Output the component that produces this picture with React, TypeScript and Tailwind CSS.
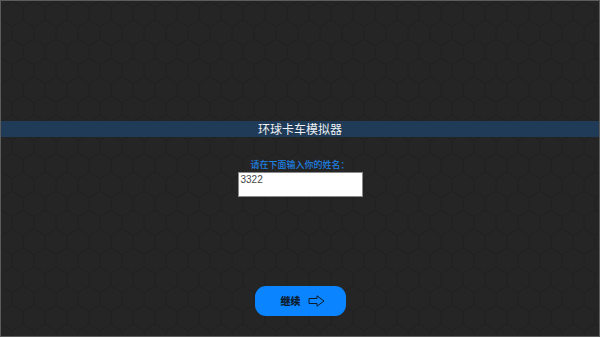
import React from "react";

function HexBg() {
  return (
    <svg className="absolute inset-0 h-full w-full" aria-hidden="true">
      <defs>
        <pattern id="hex" width="22" height="38" patternUnits="userSpaceOnUse">
          <path
            d="M0 6.5 L11 0 L22 6.5 M0 6.5 L0 19 L11 25.5 L22 19 L22 6.5 M11 25.5 L11 38"
            fill="none"
            stroke="#1f1f1f"
            strokeWidth="1"
          />
        </pattern>
      </defs>
      <rect width="100%" height="100%" fill="url(#hex)" />
    </svg>
  );
}

export default function App() {
  return (
    <div
      className="relative w-[600px] h-[337px] overflow-hidden bg-[#252525] border border-[#5c5c5c]"
      style={{ fontFamily: '"Noto Sans CJK SC", "Noto Sans", sans-serif' }}
    >
      <HexBg />
      <div className="relative flex flex-col items-center pt-[120px]">
        <div className="w-full h-[16px] bg-[#1f3b57] flex items-center justify-center">
          <span className="text-[12px] leading-none text-[#eef2f6]">环球卡车模拟器</span>
        </div>
        <div className="mt-[23px] text-[9px] font-medium leading-none text-[#1d80e2]">请在下面输入你的姓名：</div>
        <div
          className="mt-[3px] w-[125px] h-[25px] bg-white border border-[#8a8a8a] px-[2px] pt-[1px] text-[10px] leading-[12px] text-[#474747]"
          style={{ fontFamily: '"Liberation Sans", Arial, sans-serif' }}
        >
          3322
        </div>
        <button className="mt-[89px] ml-[1px] w-[91px] h-[30px] rounded-[11px] bg-[#0a84ff] flex items-center justify-center gap-[7px] pl-[4px]">
          <span className="text-[10px] font-black leading-none text-[#0d1a2a]">继续</span>
          <svg width="17" height="12" viewBox="0 0 17 12">
            <path d="M1 3.5 H9 V0.8 L16 6 L9 11.2 V8.5 H1 Z" fill="none" stroke="#0d1a2a" strokeWidth="1" strokeLinejoin="miter" />
          </svg>
        </button>
      </div>
    </div>
  );
}
